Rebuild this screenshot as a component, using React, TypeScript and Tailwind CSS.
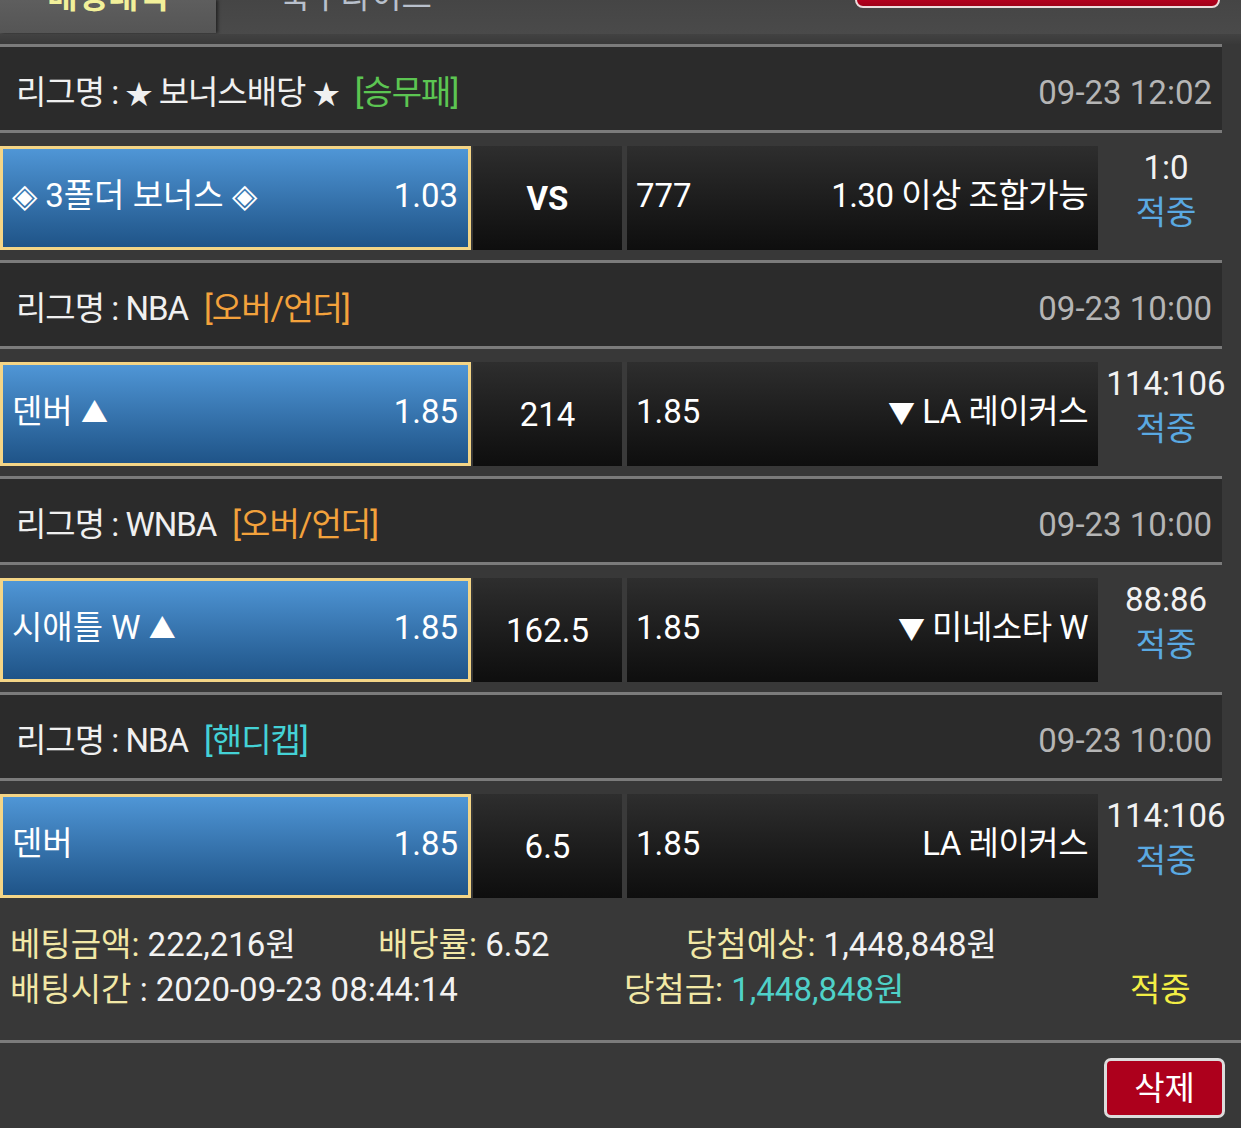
import React from "react";

type Game = {
  league: string;
  tag: string;
  tagColor: string;
  date: string;
  home: string;
  homeOdds: string;
  mid: string;
  midBold?: boolean;
  awayOdds: string;
  away: string;
  score: string;
};

const games: Game[] = [
  {
    league: "리그명 : ★ 보너스배당 ★",
    tag: "[승무패]",
    tagColor: "text-[#5cc552]",
    date: "09-23 12:02",
    home: "◈ 3폴더 보너스 ◈",
    homeOdds: "1.03",
    mid: "VS",
    midBold: true,
    awayOdds: "777",
    away: "1.30 이상 조합가능",
    score: "1:0",
  },
  {
    league: "리그명 : NBA",
    tag: "[오버/언더]",
    tagColor: "text-[#f3a23c]",
    date: "09-23 10:00",
    home: "덴버 ▲",
    homeOdds: "1.85",
    mid: "214",
    awayOdds: "1.85",
    away: "▼ LA 레이커스",
    score: "114:106",
  },
  {
    league: "리그명 : WNBA",
    tag: "[오버/언더]",
    tagColor: "text-[#f3a23c]",
    date: "09-23 10:00",
    home: "시애틀 W ▲",
    homeOdds: "1.85",
    mid: "162.5",
    awayOdds: "1.85",
    away: "▼ 미네소타 W",
    score: "88:86",
  },
  {
    league: "리그명 : NBA",
    tag: "[핸디캡]",
    tagColor: "text-[#44d2d6]",
    date: "09-23 10:00",
    home: "덴버",
    homeOdds: "1.85",
    mid: "6.5",
    awayOdds: "1.85",
    away: "LA 레이커스",
    score: "114:106",
  },
];

// shrink the symbol glyphs (▲ ▼ ★), they come out too large in the fallback font
const withSymbols = (text: string) =>
  text.split(/([▲▼★])/).map((part, i) =>
    /[▲▼★]/.test(part) ? (
      <span key={i} className="text-[27px]">
        {part}
      </span>
    ) : (
      <React.Fragment key={i}>{part}</React.Fragment>
    ),
  );

const GameBlock = ({ g }: { g: Game }) => (
  <div className="w-[1222px]">
    <div className="h-[3px] bg-[#7b7b7b]" />
    {/* league header */}
    <div className="h-[83px] bg-[#2b2b2b] flex items-center justify-between pl-[16px] pr-[10px] pt-[7px]">
      <div className="text-[#f0f0f0] tracking-[-1px] whitespace-nowrap">
        {withSymbols(g.league)}
        <span className={`ml-[16px] ${g.tagColor}`}>{g.tag}</span>
      </div>
      <div className="text-[#b5b5b5]">{g.date}</div>
    </div>
    <div className="h-[3px] bg-[#7b7b7b]" />

    {/* bet row */}
    <div className="mt-[13px] mb-[10px] flex h-[104px]">
      <div className="w-[471px] border-[3px] border-[#f4d586] bg-gradient-to-b from-[#4f96d6] to-[#1f5488] flex items-center justify-between pl-[9px] pr-[10px] pb-[5px] text-white">
        <span>{withSymbols(g.home)}</span>
        <span>{g.homeOdds}</span>
      </div>
      <div
        className={`ml-[2px] w-[149px] bg-gradient-to-b from-[#2e2e2e] to-[#0e0e0e] flex items-center justify-center text-white ${
          g.midBold ? "font-bold" : ""
        }`}
      >
        {g.mid}
      </div>
      <div className="w-[5px] bg-[#3a3a3a]" />
      <div className="w-[471px] bg-gradient-to-b from-[#2e2e2e] to-[#0e0e0e] flex items-center justify-between pl-[9px] pr-[10px] pb-[5px] text-white">
        <span>{g.awayOdds}</span>
        <span className="tracking-[-0.5px]">{withSymbols(g.away)}</span>
      </div>
      <div className="w-[124px] flex flex-col items-center justify-center pl-[12px] pb-[16px] leading-[45px]">
        <span className="text-[#f2f2f2] whitespace-nowrap">{g.score}</span>
        <span className="text-[#5aa9e2]">적중</span>
      </div>
    </div>
  </div>
);

const App = () => {
  return (
    <div
      className="w-[1241px] min-h-[1128px] bg-[#383838] text-[33px] leading-none overflow-hidden"
      style={{ fontFamily: "Roboto, 'Noto Sans CJK KR', sans-serif" }}
    >
      {/* top tab bar (scrolled, partly cut off) */}
      <div className="h-[44px] flex flex-col">
        <div className="h-[34px] bg-gradient-to-b from-[#454545] to-[#4a4a4a] flex overflow-hidden">
          <div className="w-[216px] h-[33px] bg-gradient-to-b from-[#5e5e5e] to-[#555555] shadow-[2px_0_3px_rgba(0,0,0,0.5)] flex justify-center overflow-hidden">
            <span className="text-[#f2f09a] font-bold -mt-[20px] leading-[33px]">배팅내역</span>
          </div>
          <div className="w-[280px] flex justify-center overflow-hidden">
            <span className="text-[#b8c0cc] -mt-[20px] leading-[33px]">축구라이브</span>
          </div>
          <div className="ml-auto mr-[21px] w-[365px] h-[10px] -mt-[2px] rounded-b-[8px] border-[2px] border-[#ecdcdc] bg-gradient-to-b from-[#b3001d] to-[#a00018]" />
        </div>
        <div className="h-[10px] bg-gradient-to-b from-[#424242] to-[#393939]" />
      </div>

      {games.map((g, i) => (
        <GameBlock key={i} g={g} />
      ))}

      {/* summary */}
      <div className="pt-[14px] pb-[28px] pl-[10px] leading-[45px]">
        <div className="flex">
          <span className="w-[368px]">
            <span className="text-[#f2e8a6]">베팅금액:</span>
            <span className="text-[#f2f2f2]"> 222,216원</span>
          </span>
          <span className="w-[308px]">
            <span className="text-[#f2e8a6]">배당률:</span>
            <span className="text-[#f2f2f2]"> 6.52</span>
          </span>
          <span>
            <span className="text-[#f2e8a6]">당첨예상:</span>
            <span className="text-[#f2f2f2]"> 1,448,848원</span>
          </span>
        </div>
        <div className="flex">
          <span className="w-[614px]">
            <span className="text-[#f2e8a6]">배팅시간</span>
            <span className="text-[#f2f2f2]"> : 2020-09-23 08:44:14</span>
          </span>
          <span className="w-[506px]">
            <span className="text-[#f2e8a6]">당첨금:</span>
            <span className="text-[#4fd1c8]"> 1,448,848원</span>
          </span>
          <span className="text-[#f3ee45]">적중</span>
        </div>
      </div>
      <div className="h-[3px] bg-[#7b7b7b]" />

      <div className="flex justify-end pr-[16px] pt-[15px]">
        <button className="w-[121px] h-[60px] rounded-[7px] border-[3px] border-[#dcdcdc] bg-[#ad001c] text-white">
          삭제
        </button>
      </div>
    </div>
  );
};

export default App;
